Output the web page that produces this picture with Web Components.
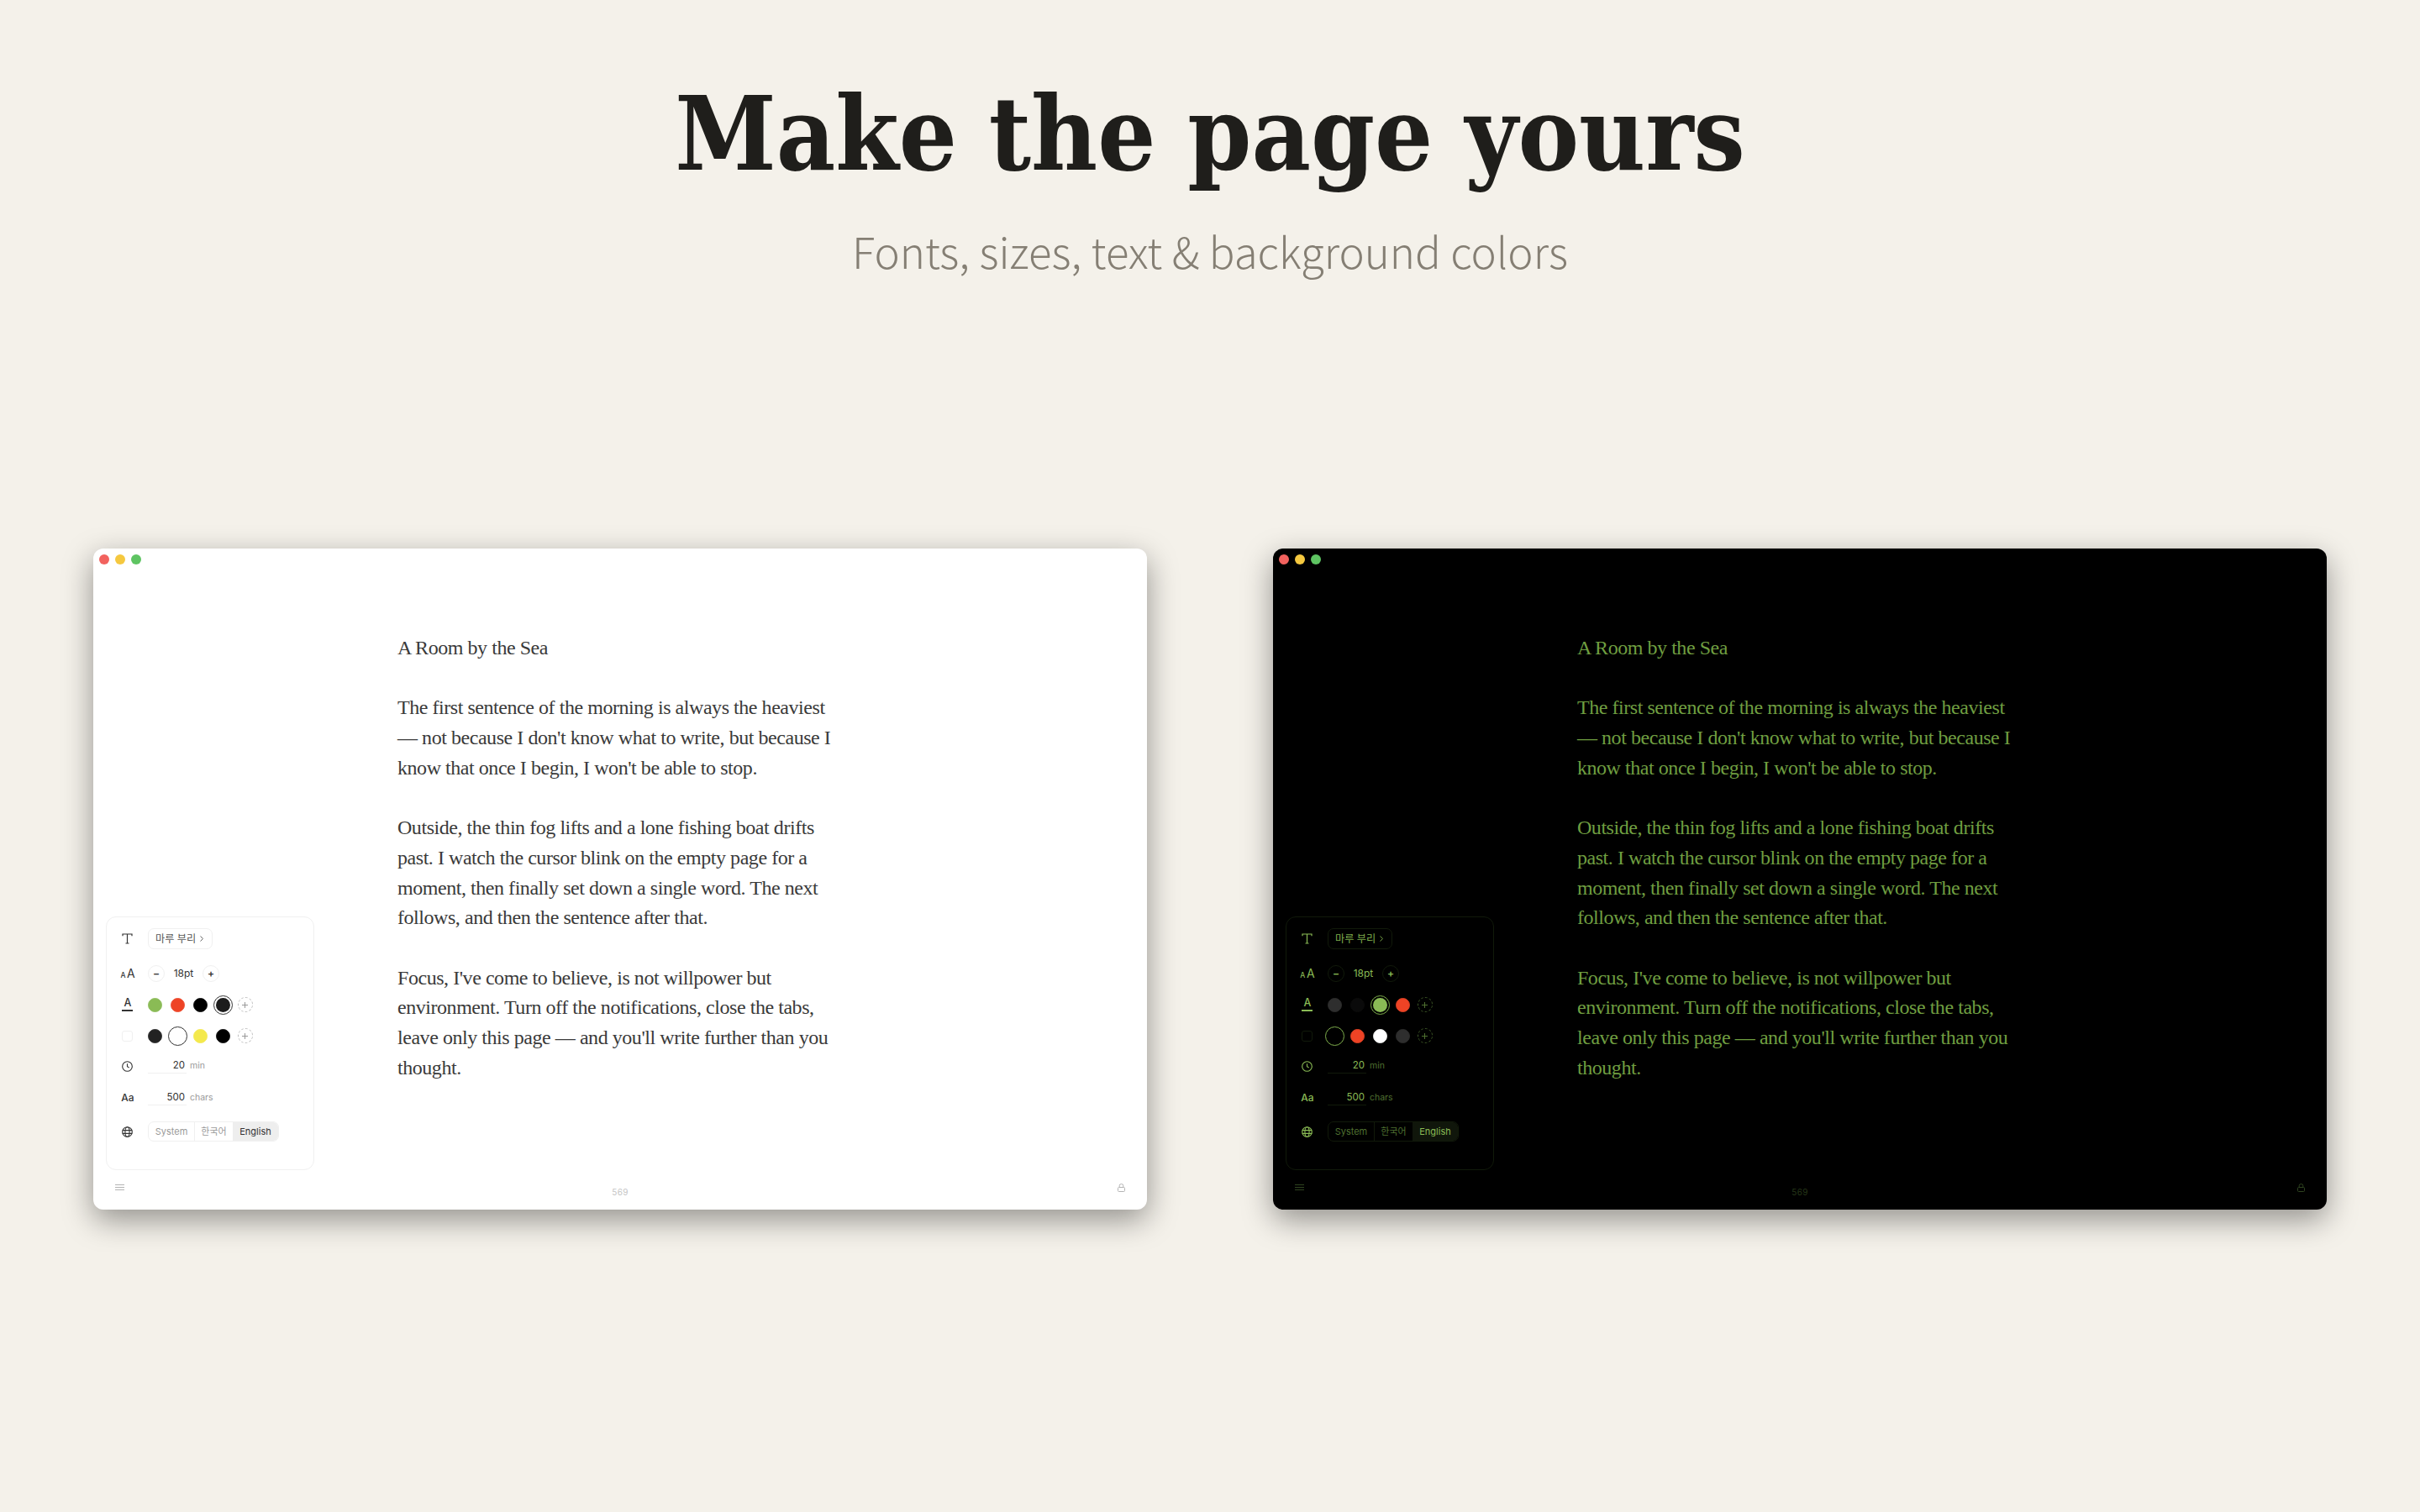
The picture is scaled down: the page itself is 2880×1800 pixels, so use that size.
<!DOCTYPE html>
<html lang="en"><head><meta charset="utf-8"><title>Make the page yours</title>
<style>
html,body{margin:0;background:#f4f1ea;}
body{width:2880px;height:1800px;overflow:hidden;font-family:"Inter","Noto Sans CJK KR",sans-serif;}
</style></head><body>
<promo-page>
  <promo-hero slot="hero"></promo-hero>
  <app-window theme="light"></app-window>
  <app-window theme="dark"></app-window>
</promo-page>
<script>
const UI='"Inter","Noto Sans CJK KR",sans-serif';
class PromoPage extends HTMLElement{constructor(){super();this.attachShadow({mode:'open'}).innerHTML=`<style>
:host{display:block;width:2880px;height:1800px;box-sizing:border-box;padding:80px 110.7px 0}
.w{display:grid;grid-template-columns:1254.6px 1254.6px;column-gap:149.4px;margin-top:324px}
</style><slot name="hero"></slot><div class="w"><slot></slot></div>`;}}
class PromoHero extends HTMLElement{constructor(){super();this.attachShadow({mode:'open'}).innerHTML=`<style>
:host{display:block;text-align:center}
h1{margin:0;font:700 121px/160px "DejaVu Serif",serif;font-stretch:condensed;color:#1f1e1b;white-space:nowrap}
p{margin:27px 0 0;font:300 51px/62px "Noto Sans CJK KR",sans-serif;color:#857f74;white-space:nowrap}
</style><h1>Make the page yours</h1><p>Fonts, sizes, text &amp; background colors</p>`;}}
const THEMES={
light:{bg:'#fff',fg:'#3a3a3a',ui:'#333',pill:'#555',dim:'#999',line:'#f0f0f0',sel:'#eeeeee',icon:'#333',foot:'#b4b4b4',foot2:'#c4c4c4',
 text:[['#8abb55'],['#ee4325'],['#000'],['#1c1c1c',1]],back:[['#222'],['#fff',1],['#f4e94c'],['#000']],ring:'#333',dash:'#bbb'},
dark:{bg:'#000',fg:'#6f9e40',ui:'#8abb55',pill:'#7fae4c',dim:'#4f7030',line:'#111a0a',sel:'#10160b',icon:'#8abb55',foot:'#2f4420',foot2:'#263719',
 text:[['#2e2e2e'],['#0a0a0a'],['#8abb55',1],['#ee4325']],back:[['#000',1],['#ee4325'],['#fff'],['#2e2e2e']],ring:'#7fae4c',dash:'#3f5a28'}};
class AppWindow extends HTMLElement{constructor(){super();const t=THEMES[this.getAttribute('theme')];this.attachShadow({mode:'open'}).innerHTML=`<style>
:host{display:flex;flex-direction:column;position:relative;height:787px;border-radius:12px;background:${t.bg};
 box-shadow:0 12px 36px rgba(0,0,0,.4);
 --fg:${t.fg};--ui:${t.ui};--pill:${t.pill};--dim:${t.dim};--line:${t.line};--sel:${t.sel};--icon:${t.icon};--foot:${t.foot};--foot2:${t.foot2};--ring:${t.ring};--dash:${t.dash};--bg:${t.bg}}
settings-panel{position:absolute;left:15.3px;bottom:47px}
.main{flex:1;min-height:0}
</style><traffic-lights></traffic-lights><div class="main"><writing-page></writing-page></div><settings-panel></settings-panel><window-foot></window-foot>`;
const p=this.shadowRoot.querySelector('settings-panel');p.setColors(t);}}
class TrafficLights extends HTMLElement{constructor(){super();this.attachShadow({mode:'open'}).innerHTML=`<style>
:host{display:flex;gap:7px;padding:7px 0 0 7px;height:12px}
i{width:12px;height:12px;border-radius:50%;display:block}
</style><i style="background:#f2625e"></i><i style="background:#f5c83f"></i><i style="background:#5ec462"></i>`;}}
class WritingPage extends HTMLElement{constructor(){super();this.attachShadow({mode:'open'}).innerHTML=`<style>
:host{display:block;padding:82px 0 0 362.3px;font:400 24px/35.7px "Liberation Serif",serif;letter-spacing:-.45px;color:var(--fg);white-space:nowrap}
p{margin:0 0 35.7px}
</style><p>A Room by the Sea</p>
<p>The first sentence of the morning is always the heaviest<br>— not because I don't know what to write, but because I<br>know that once I begin, I won't be able to stop.</p>
<p>Outside, the thin fog lifts and a lone fishing boat drifts<br>past. I watch the cursor blink on the empty page for a<br>moment, then finally set down a single word. The next<br>follows, and then the sentence after that.</p>
<p>Focus, I've come to believe, is not willpower but<br>environment. Turn off the notifications, close the tabs,<br>leave only this page — and you'll write further than you<br>thought.</p>`;}}
class WindowFoot extends HTMLElement{constructor(){super();this.attachShadow({mode:'open'}).innerHTML=`<style>
:host{display:flex;justify-content:space-between;align-items:flex-start;height:40px;padding:0 26.3px}
svg{display:block;margin-top:10px}
svg.l{margin-top:9px;margin-left:2px}
span{font:400 10px/12px ${UI};color:var(--foot2);margin-top:13px;letter-spacing:.3px}
</style>
<svg width="11" height="7" viewBox="0 0 11 7" fill="none" stroke="var(--foot)" stroke-width="1"><path d="M0 .5h11M0 3.5h11M0 6.5h11"/></svg>
<span>569</span>
<svg class="l" width="9" height="10" viewBox="0 0 9 10" fill="none" stroke="var(--foot)" stroke-width="1"><rect x=".5" y="4.5" width="8" height="5" rx="1"/><path d="M2.2 4.5V2.6a2.3 2.1 0 0 1 4.6 0v1.9"/></svg>`;}}
class PanelRow extends HTMLElement{constructor(){super();this.attachShadow({mode:'open'}).innerHTML=`<style>
:host{display:grid;grid-template-columns:28px auto;column-gap:10px;align-items:center;justify-content:start}
.i{display:flex;justify-content:center;align-items:center;color:var(--icon)}
.c{display:flex;align-items:center}
</style><div class="i"><slot name="icon"></slot></div><div class="c"><slot></slot></div>`;}}
class ColorSwatch extends HTMLElement{constructor(){super();const c=this.getAttribute('color'),s=this.hasAttribute('selected');this.attachShadow({mode:'open'}).innerHTML=`<style>
:host{display:block;width:17px;height:17px;border-radius:50%;background:${c};box-sizing:border-box;
 ${s?'outline:1px solid var(--ring);outline-offset:2px;':'border:1px solid color-mix(in srgb,'+c+' 92%,var(--line));'}}
</style>`;}}
class AddSwatch extends HTMLElement{constructor(){super();this.attachShadow({mode:'open'}).innerHTML=`<style>
:host{display:flex;align-items:center;justify-content:center;width:18px;height:18px;border-radius:50%;box-sizing:border-box;border:1px dashed var(--dash);margin-left:-.5px}
svg{display:block}
</style><svg width="7" height="7" viewBox="0 0 7 7" stroke="var(--dim)" stroke-width="1"><path d="M3.5 0v7M0 3.5h7"/></svg>`;}}
class StepButton extends HTMLElement{constructor(){super();this.attachShadow({mode:'open'}).innerHTML=`<style>
:host{display:flex;align-items:center;justify-content:center;width:20px;height:20px;border-radius:50%;box-sizing:border-box;border:1px solid var(--line);font:600 12px/1 ${UI};color:var(--ui)}
</style><slot></slot>`;}}
class NumField extends HTMLElement{constructor(){super();this.attachShadow({mode:'open'}).innerHTML=`<style>
:host{display:flex;align-items:flex-start;height:18px}
.v{width:46px;height:18px;box-sizing:border-box;border-bottom:1px solid var(--line);text-align:right;padding-right:2px;font:400 11.5px/17px ${UI};color:var(--ui)}
.u{margin-left:4px;font:400 10.5px/17px ${UI};color:var(--dim)}
</style><div class="v">${this.getAttribute('value')}</div><div class="u">${this.getAttribute('unit')}</div>`;}}
class SegControl extends HTMLElement{constructor(){super();this.attachShadow({mode:'open'}).innerHTML=`<style>
:host{display:flex;height:24px;box-sizing:border-box;border:1px solid var(--line);border-radius:7px;overflow:hidden;font:400 11px/22px ${UI};color:var(--dim)}
div{text-align:center;box-sizing:border-box}
.s{width:55px;border-right:1px solid var(--line)}.k{width:45px}.e{width:54px;background:var(--sel);color:var(--ui)}
</style><div class="s">System</div><div class="k">한국어</div><div class="e">English</div>`;}}
class SettingsPanel extends HTMLElement{
constructor(){super();this.attachShadow({mode:'open'});}
setColors(t){const sw=a=>a.map(([c,s])=>`<color-swatch color="${c}"${s?' selected':''}></color-swatch>`).join('')+'<add-swatch></add-swatch>';
this.shadowRoot.innerHTML=`<style>
:host{display:block;width:248px;height:302px;box-sizing:border-box;border:1px solid var(--line);border-radius:12px;padding:13px 0 0 11px;background:var(--bg)}
panel-row{margin-top:var(--mt,0)}
.pill{display:flex;align-items:center;gap:5px;height:25px;box-sizing:border-box;width:77px;padding-left:8px;border:1px solid var(--line);border-radius:7px;font:400 12.2px/23px ${UI};color:var(--pill);white-space:nowrap}
.sz{width:45px;text-align:center;font:400 12px/20px ${UI};color:var(--ui)}
.sw{display:flex;gap:9.7px;align-items:center;height:23px;padding-left:.5px}
.aa{font:400 14px/1 ${UI};color:var(--icon);white-space:nowrap}.aa small{font-size:8.5px;font-weight:500;margin-right:1.5px}
.ua{font:500 12.5px/12px ${UI};color:var(--icon);border-bottom:2px solid var(--icon);width:13px;text-align:center;padding-bottom:2px}
.bx{width:13px;height:13px;box-sizing:border-box;border:1px solid var(--line);border-radius:3px}
.a2{font:500 12px/1 ${UI};color:var(--icon)}
svg{display:block}
</style>
<panel-row><svg slot="icon" width="13" height="13" viewBox="0 0 13 13" fill="none" stroke="currentColor" stroke-width="1.2"><path d="M1 3.2V1h11v2.2M6.5 1v11M4.5 12h4"/></svg><div class="pill">마루 부리<svg width="4" height="7" viewBox="0 0 4 7" fill="none" stroke="currentColor" stroke-width=".9"><path d="M.5.5l3 3-3 3"/></svg></div></panel-row>
<panel-row style="--mt:19px"><div slot="icon" class="aa"><small>A</small>A</div><step-button>−</step-button><div class="sz">18pt</div><step-button>+</step-button></panel-row>
<panel-row style="--mt:15.5px"><div slot="icon" class="ua">A</div><div class="sw">${sw(t.text)}</div></panel-row>
<panel-row style="--mt:14px"><div slot="icon" class="bx"></div><div class="sw">${sw(t.back)}</div></panel-row>
<panel-row style="--mt:15.5px"><svg slot="icon" width="13" height="13" viewBox="0 0 13 13" fill="none" stroke="currentColor" stroke-width="1.1"><circle cx="6.5" cy="6.5" r="5.8"/><path d="M6.5 3.2v3.5l2.2 1.2"/></svg><num-field value="20" unit="min"></num-field></panel-row>
<panel-row style="--mt:20px"><div slot="icon" class="a2">Aa</div><num-field value="500" unit="chars"></num-field></panel-row>
<panel-row style="--mt:19px"><svg slot="icon" width="13" height="13" viewBox="0 0 13 13" fill="none" stroke="currentColor" stroke-width="1.1"><circle cx="6.5" cy="6.5" r="5.8"/><ellipse cx="6.5" cy="6.5" rx="2.6" ry="5.8"/><path d="M.7 4.6h11.6M.7 8.4h11.6"/></svg><seg-control></seg-control></panel-row>`;}}
customElements.define('promo-page',PromoPage);
customElements.define('promo-hero',PromoHero);
customElements.define('traffic-lights',TrafficLights);
customElements.define('writing-page',WritingPage);
customElements.define('window-foot',WindowFoot);
customElements.define('panel-row',PanelRow);
customElements.define('color-swatch',ColorSwatch);
customElements.define('add-swatch',AddSwatch);
customElements.define('step-button',StepButton);
customElements.define('num-field',NumField);
customElements.define('seg-control',SegControl);
customElements.define('settings-panel',SettingsPanel);
customElements.define('app-window',AppWindow);
</script>
</body></html>
